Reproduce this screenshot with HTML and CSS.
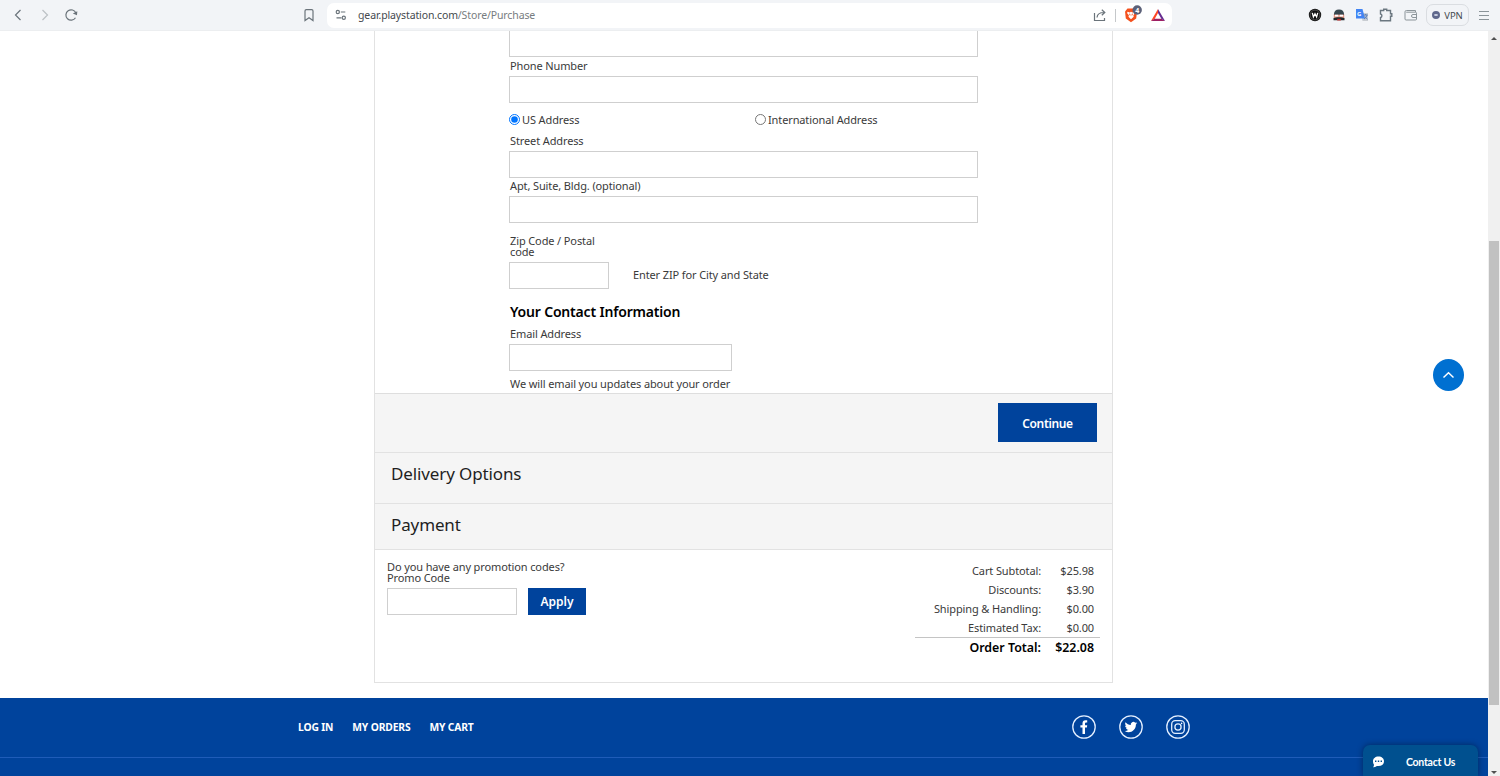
FILE: index.html
```html
<!DOCTYPE html>
<html lang="en">
<head>
    <meta charset="UTF-8">
    <title>Purchase</title>
    <meta name="viewport" content="width=device-width, initial-scale=1">
    <link rel="stylesheet" href="styles.css">
</head>
<body>
<header class="toolbar">
    <div class="nav-icons">
        <svg width="14" height="14" viewBox="0 0 14 14"><path d="M9.500 2L4.500 7l5 5" /></svg>
        <svg class="faded" width="14" height="14" viewBox="0 0 14 14"><path d="M4.500 2l5 5-5 5" /></svg>
        <svg width="14" height="14" viewBox="0 0 14 14"><path d="M11.500 9.800A5.200 5.200 0 1 1 11.900 5" /><path class="solid" d="M8.800 5.600L13 7.200L13.300 3.200Z" /></svg>
    </div>
    <svg class="bookmark" width="12" height="14" viewBox="0 0 12 14"><path d="M3.300 1.600h5.400q1.300 0 1.300 1.300v9.600L6 9.800L2 12.500V2.900q0-1.300 1.300-1.300z" /></svg>
    <div class="address-bar">
        <svg width="12" height="12" viewBox="0 0 12 12"><circle cx="2.800" cy="3" r="1.600" /><path d="M5.800 3h4.500M1.500 8.800h5" /><circle cx="8.800" cy="8.800" r="1.600" /></svg>
        <span class="url">gear.playstation.com<span>/Store/Purchase</span></span>
        <svg class="share" width="14" height="14" viewBox="0 0 14 14"><path d="M1.500 5v7.500h10V10M4 9.500c.3-3.500 2.500-5 7-5M8.800 1.800l3 2.700l-3 2.700" /></svg>
        <span class="divider"></span>
        <svg class="brave" width="20" height="20" viewBox="0 0 20 20">
            <path fill="#f4511e" d="M4.500 3.500h7l2.500 3l-.8 7L8 17.200L2.800 13.500L2 6.500z" />
            <path fill="#fff" d="M4.700 6.800l2 .6l1.300-.6l1.500.6l2-.6l.6 1.300l-1.700 2.200l.3 1.500l-2.700 2.500L5.500 11.800l.4-1.500l-1.900-2.200z" />
            <path fill="#f4511e" d="M6 8.400l1.300.5v2.200L6.500 10zM10 8.400l-1.300.5v2.200l.8-1.100z" />
            <circle cx="14.200" cy="5" r="4.700" fill="#5b6078" />
            <text x="12.200" y="7.500" fill="#fff">4</text>
        </svg>
        <svg class="bat" width="16" height="14" viewBox="0 0 16 14">
            <path fill="#ff4724" d="M8 1L1 13l3.600-2L8 5z" />
            <path fill="#9e1f63" d="M1 13h14l-3.400-2.200H4.500z" />
            <path fill="#662d91" d="M8 1l7 12l-3.500-2L8 5z" />
        </svg>
    </div>
    <div class="extensions">
        <svg width="14" height="14" viewBox="0 0 14 14"><circle cx="7" cy="7" r="6.200" fill="#111" /><circle cx="7" cy="7" r="4.900" fill="none" stroke="#888" stroke-width=".5" /><path fill="none" stroke="#fff" stroke-width="1.300" d="M4.300 4.800L5.400 9L7 5.800L8.600 9l1.100-4.200" /></svg>
        <svg class="ninja" width="14" height="14" viewBox="0 0 14 14"><path fill="#37474f" d="M2 6.500q0-5 5-5t5 5z" /><path fill="#e89a88" d="M1.800 6h10.400v4H1.800z" /><path fill="#37474f" d="M2 5.500h10v1.200H2z" /><path fill="#fff" d="M3 6.800h3.300v1.800H3zM7.700 6.800H11v1.800H7.700z" /><path fill="#22282c" d="M1.500 12.300V10L5 9.200h4l3.500.8v2.300z" /><path fill="#c62828" d="M5.200 10.800h3.600v1.700H5.200z" /></svg>
        <svg class="translate" width="14" height="14" viewBox="0 0 14 14"><path fill="#c9cdd2" d="M6 5h7v8H7.500z" /><path fill="#4285f4" d="M1 1h6.500l2.500 9.500H1z" /><text x="2" y="7.600" fill="#fff">G</text><path fill="none" stroke="#5c7fb8" d="M8.500 7h4.200M10.600 6v1M12 7.200q-.8 2.800-3 3.800M9.700 8.500l2.800 2.700" /></svg>
        <svg class="line" width="16" height="16" viewBox="0 0 16 16"><path stroke-width="1.400" d="M2.500 3.500h3.200V2.300h3v1.200h3.800v3.200h1.300v2.600h-1.300v4.500h-10V10.500q1.400-.2 1.400-1.700T2.500 7z" /></svg>
        <svg class="line wallet" width="14" height="14" viewBox="0 0 14 14"><path d="M11.500 4V2.500h-9q-1.500 0-1.500 1.300V11q0 1 1.100 1h9.300q1.100 0 1.100-1V5.200q0-1-1.100-1H2.200M12.500 6.500H9q-1.500 0-1.500 1.500T9 9.500h3.500" /></svg>
        <div class="vpn"><span></span>VPN</div>
        <svg class="line menu" width="12" height="12" viewBox="0 0 12 12"><path d="M1 2.500h10M1 6.500h10M1 10.500h10" /></svg>
    </div>
</header>

<div class="viewport">
    <main class="page">
        <section class="checkout">
            <form class="address">
                <input type="text" class="cut" aria-label="Name">
                <label class="phone-label" for="phone">Phone Number</label>
                <input type="text" id="phone">
                <div class="address-type">
                    <label><input type="radio" name="type" checked><span>US Address</span></label>
                    <label><input type="radio" name="type"><span>International Address</span></label>
                </div>
                <label class="street-label" for="street">Street Address</label>
                <input type="text" id="street">
                <label class="apt-label" for="apt">Apt, Suite, Bldg. (optional)</label>
                <input type="text" id="apt">
                <label class="zip-label" for="zip">Zip Code / Postal code</label>
                <div class="zip-row">
                    <input type="text" id="zip">
                    <span>Enter ZIP for City and State</span>
                </div>
                <h3>Your Contact Information</h3>
                <label class="email-label" for="email">Email Address</label>
                <input type="text" id="email">
                <p>We will email you updates about your order</p>
            </form>
            <div class="continue-bar">
                <button type="button" class="continue">Continue</button>
            </div>
            <h2 class="delivery">Delivery Options</h2>
            <h2 class="payment">Payment</h2>
            <div class="summary">
                <div class="promo">
                    <div class="question">Do you have any promotion codes?</div>
                    <label for="promo">Promo Code</label>
                    <div class="promo-row">
                        <input type="text" id="promo">
                        <button type="button">Apply</button>
                    </div>
                </div>
                <dl class="totals">
                    <div><dt>Cart Subtotal:</dt><dd>$25.98</dd></div>
                    <div><dt>Discounts:</dt><dd>$3.90</dd></div>
                    <div><dt>Shipping &amp; Handling:</dt><dd>$0.00</dd></div>
                    <div><dt>Estimated Tax:</dt><dd>$0.00</dd></div>
                    <div class="order-total"><dt>Order Total:</dt><dd>$22.08</dd></div>
                </dl>
            </div>
        </section>
        <footer class="footer">
            <div class="footer-top">
                <nav>
                    <a>LOG IN</a>
                    <a>MY ORDERS</a>
                    <a>MY CART</a>
                </nav>
                <div class="social">
                    <svg width="24" height="24" viewBox="0 0 24 24"><circle cx="12" cy="12" r="11.200" /><path class="solid" d="M10.500 19v-6.400H8.400v-2.400h2.100V8.400q0-3.200 3-3.200h1.700v2.300H14q-1 0-1 1.100v1.600h2.200l-.3 2.400H13V19z" /></svg>
                    <svg width="24" height="24" viewBox="0 0 24 24"><circle cx="12" cy="12" r="11.200" /><path class="solid" d="M18.200 8.100c-.5.200-1 .4-1.500.4.600-.3 1-.8 1.100-1.400-.5.300-1 .5-1.600.6a2.560 2.560 0 0 0-4.400 2.300C9.700 9.900 7.800 8.900 6.500 7.300c-.7 1.200-.3 2.700.8 3.400-.4 0-.8-.1-1.200-.3 0 1.300.9 2.300 2.100 2.600-.4.100-.8.100-1.200 0 .3 1 1.300 1.800 2.400 1.800A5.200 5.200 0 0 1 5.700 16c4.800 3 11.200 0 11.200-6.500.5-.4 1-.8 1.300-1.400z" /></svg>
                    <svg width="24" height="24" viewBox="0 0 24 24"><circle cx="12" cy="12" r="11.200" /><rect x="5.700" y="5.700" width="12.600" height="12.600" rx="3.500" /><circle cx="12" cy="12" r="3.100" /><circle class="solid" cx="15.600" cy="8.400" r=".8" /></svg>
                </div>
            </div>
        </footer>
        <button type="button" class="to-top" aria-label="Back to top"><svg width="14" height="10" viewBox="0 0 14 10"><path d="M1.500 7.500L6.500 2.800l5 4.700" /></svg></button>
        <div class="contact">
            <svg width="13" height="12" viewBox="0 0 13 12"><path fill="#fff" d="M6.500.5C9.800.5 12 2.600 12 5.300S9.800 10.100 6.500 10.100q-.8 0-1.600-.2Q3 11.400 1 11.300q1-1 1-2.600Q1 7.400 1 5.300C1 2.600 3.200.5 6.500.5z" /><path fill="#00508f" d="M3 4.600h1.400V6H3zM5.800 4.600h1.400V6H5.800zM8.600 4.600H10V6H8.600z" /></svg>
            <span>Contact Us</span>
        </div>
    </main>
    <div class="scrollbar">
        <span class="arrow up"></span>
        <span class="thumb"></span>
        <span class="arrow down"></span>
    </div>
</div>
</body>
</html>
```
FILE: styles.css
```css
* {
    box-sizing: border-box;
}
body {
    margin: 0;
    height: 776px;
    overflow: hidden;
    background: #fff;
    color: #3a3a3a;
    font-family: "Noto Sans", sans-serif;
    font-size: 11px;
    line-height: 11px;
    letter-spacing: -0.12px;
}
svg {
    display: block;
    flex: none;
}
h2, h3, p, dl, dd {
    margin: 0;
}
span {
    white-space: nowrap;
}

/* browser toolbar */
.toolbar {
    display: flex;
    align-items: center;
    height: 31px;
    padding: 0 10px 0 11px;
    background: #f2f4f7;
    border-bottom: 1px solid #eceef0;
}
.toolbar > .nav-icons svg, .bookmark, .address-bar > svg {
    fill: none;
    stroke: #6b747b;
    stroke-width: 1.2;
}
.toolbar .nav-icons .faded {
    stroke: #bcc1c5;
}
.toolbar .nav-icons .solid {
    fill: #6b747b;
    stroke: none;
}
.nav-icons {
    display: flex;
    gap: 12.5px;
    width: 292px;
}
.address-bar {
    display: flex;
    align-items: center;
    width: 845px;
    height: 25px;
    margin-left: 12px;
    padding-left: 8px;
    border-radius: 7px;
    background: #fff;
}
.url {
    width: 741px;
    margin-left: 11px;
    color: #44494e;
    font-size: 10.5px;
}
.url span {
    color: #777c80;
}
.address-bar .share {
    margin-left: -6px;
}
.divider {
    width: 1px;
    height: 13px;
    margin: 0 7px 0 8px;
    background: #c5c8ca;
}
.toolbar .brave, .toolbar .bat {
    stroke: none;
}
.brave text {
    font-size: 7px;
    font-weight: bold;
}
.bat {
    margin-left: 7px;
}
.extensions {
    display: flex;
    align-items: center;
    gap: 9px;
    margin-left: auto;
}
.extensions text {
    font-size: 6px;
    font-weight: bold;
}
.extensions .line {
    fill: none;
    stroke: #6b7780;
}
.extensions .ninja {
    margin-left: 1px;
}
.extensions .wallet {
    margin: 0 -1px 0 1px;
    stroke: #8b9499;
}
.extensions .menu {
    stroke: #8b9499;
}
.vpn {
    display: flex;
    align-items: center;
    justify-content: center;
    gap: 4px;
    width: 43px;
    height: 22px;
    border: 1px solid #dadde1;
    border-radius: 7px;
    color: #454a50;
    font-size: 9.5px;
}
.vpn span {
    width: 8px;
    height: 8px;
    border: 3px solid #60688c;
    border-left-width: 2px;
    border-right-width: 2px;
    border-radius: 50%;
    background: #d0d4e4;
}

.viewport {
    display: flex;
    height: 745px;
}
.page {
    position: relative;
    width: 1488px;
    overflow: hidden;
}

/* checkout */
.checkout {
    width: 739px;
    height: 652px;
    margin-left: 374px;
    border: 1px solid #e2e2e2;
    border-top: none;
}
.address {
    width: 469px;
    height: 362px;
    margin-left: 134px;
}
.address label, .address p {
    display: block;
    padding-left: 1px;
}
input[type="text"] {
    display: block;
    width: 100%;
    height: 27px;
    padding: 0 5px;
    border: 1px solid #cfcfcf;
    background: #fff;
}
.address .cut {
    height: 26px;
    border-top: none;
}
.phone-label, .street-label {
    height: 19px;
    line-height: 17px;
}
.address-type {
    display: flex;
    height: 29px;
    padding-top: 6px;
}
.address .address-type label {
    display: flex;
    flex: none;
    align-items: center;
    width: 246px;
    height: 21px;
    padding-left: 0;
}
.address-type input {
    width: 11px;
    height: 11px;
    margin: 0 2px 0 0;
}
.apt-label {
    height: 18px;
    line-height: 16px;
}
#zip {
    width: 100px;
}
.zip-label {
    width: 105px;
    height: 39px;
    padding-top: 12px;
}
.zip-row {
    display: flex;
    gap: 24px;
    line-height: 25px;
}
.address h3 {
    height: 34px;
    padding: 6px 0 0 1px;
    color: #000;
    font-size: 14px;
    font-weight: 600;
    letter-spacing: -0.18px;
    line-height: 34px;
}
.email-label {
    height: 21px;
    line-height: 21px;
}
#email {
    width: 223px;
}
.address p {
    padding-top: 7px;
}
.continue-bar {
    display: flex;
    justify-content: flex-end;
    height: 59px;
    padding: 9px 15px 0 0;
    border-top: 1px solid #dedede;
    background: #f5f5f5;
}
button {
    padding: 0;
    border: none;
    background: #00439c;
    color: #fff;
    font-family: inherit;
    font-size: 12px;
    font-weight: 600;
}
.continue {
    width: 99px;
    height: 39px;
    padding-top: 1px;
    letter-spacing: -0.35px;
}
h2 {
    padding-left: 16px;
    border-top: 1px solid #e2e2e2;
    background: #f5f5f5;
    color: #1f1f1f;
    font-size: 17px;
    font-weight: 400;
    line-height: 42px;
}
.delivery {
    height: 51px;
}
.payment {
    height: 47px;
    border-bottom: 1px solid #e2e2e2;
    line-height: 41px;
}
.summary {
    display: flex;
    justify-content: space-between;
    padding: 11px 12px 0;
}
.promo-row {
    display: flex;
    gap: 11px;
    margin-top: 5px;
}
#promo {
    width: 130px;
}
.promo-row button {
    width: 58px;
    height: 27px;
}
.totals {
    width: 185px;
}
.totals div {
    display: flex;
    justify-content: flex-end;
    height: 19px;
    padding-right: 6px;
    line-height: 19px;
}
.totals dd {
    width: 53px;
    text-align: right;
}
.totals .order-total {
    border-top: 1px solid #c4c4c4;
    color: #000;
    font-size: 12.4px;
    font-weight: 600;
    letter-spacing: 0;
}

/* footer */
.footer {
    height: 78px;
    margin-top: 15px;
    background: #00439c;
}
.footer-top {
    display: flex;
    align-items: center;
    justify-content: space-between;
    height: 60px;
    padding: 0 298px 2px;
    border-bottom: 1px solid #1f5cb8;
}
.footer nav {
    display: flex;
    gap: 19px;
    padding-top: 1px;
    color: #fff;
    font-size: 10.3px;
    font-weight: 700;
    letter-spacing: -0.15px;
}
.social {
    display: flex;
    gap: 23px;
}
.social svg {
    fill: none;
    stroke: #e3efff;
    stroke-width: 1.3;
}
.social .solid {
    fill: #fff;
    stroke: none;
}

.to-top {
    position: absolute;
    top: 328px;
    right: 24px;
    display: flex;
    align-items: center;
    justify-content: center;
    width: 31px;
    height: 32px;
    border-radius: 50%;
    background: #0070d1;
}
.to-top svg {
    fill: none;
    stroke: #fff;
    stroke-width: 1.5;
}
.contact {
    position: absolute;
    right: 10px;
    bottom: 0;
    display: flex;
    align-items: center;
    gap: 21px;
    width: 115px;
    height: 31px;
    padding: 3px 0 0 9px;
    border-radius: 7px 7px 0 0;
    background: #00508f;
    box-shadow: 0 0 6px rgba(0, 0, 0, 0.4);
    color: #fff;
    font-family: Lato, sans-serif;
    font-size: 10.5px;
    font-weight: 700;
    letter-spacing: -0.25px;
}

/* scrollbar */
.scrollbar {
    display: flex;
    flex-direction: column;
    align-items: center;
    width: 12px;
    padding: 6px 0 2px;
    background: #f0f0f0;
}
.arrow {
    border: 3px solid transparent;
}
.up {
    border-top: none;
    border-bottom: 3px solid #505050;
}
.down {
    margin-top: auto;
    border-bottom: none;
    border-top: 3px solid #505050;
}
.thumb {
    width: 10px;
    height: 464px;
    margin-top: 201px;
    background: #c1c1c1;
}
```
